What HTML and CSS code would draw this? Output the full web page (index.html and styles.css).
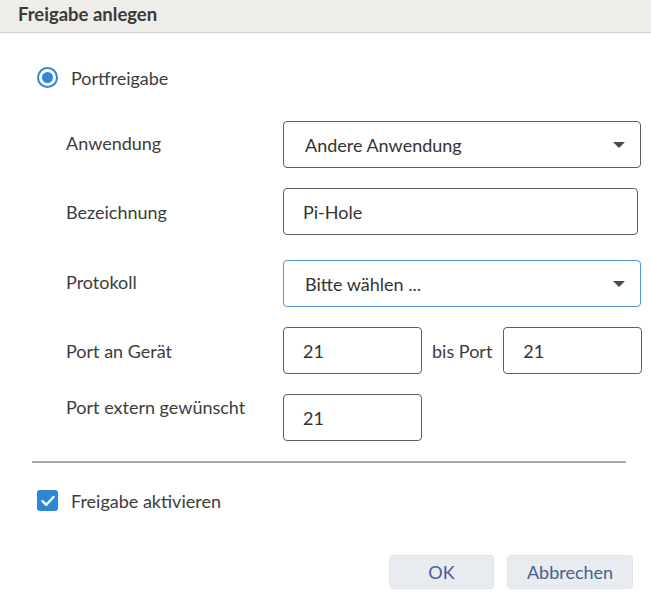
FILE: index.html
```html
<!DOCTYPE html>
<html lang="de">
<head>
<meta charset="utf-8">
<title>Freigabe anlegen</title>
<link rel="stylesheet" href="styles.css">
</head>
<body>
<div class="dialog">
  <div class="header">Freigabe anlegen</div>
  <div class="content">
    <div class="choice radio-row">
      <span class="radio"><span class="radio-dot"></span></span>
      <span class="choice-label">Portfreigabe</span>
    </div>
    <div class="form">
      <div class="label first">Anwendung</div>
      <div class="field select wide">
        <span>Andere Anwendung</span>
        <span class="arrow"></span>
      </div>

      <div class="label">Bezeichnung</div>
      <div class="field input mid"><span>Pi-Hole</span></div>

      <div class="label gap-lg">Protokoll</div>
      <div class="field select wide focus gap-lg">
        <span>Bitte wählen ...</span>
        <span class="arrow"></span>
      </div>

      <div class="label">Port an Gerät</div>
      <div class="port-row">
        <div class="field input small"><span>21</span></div>
        <span class="bis">bis Port</span>
        <div class="field input small"><span>21</span></div>
      </div>

      <div class="label top">Port extern gewünscht</div>
      <div class="port-row">
        <div class="field input small"><span>21</span></div>
      </div>
    </div>
    <hr class="divider">
    <div class="choice check-row">
      <span class="checkbox">
        <svg width="14" height="12" viewBox="0 0 14 12"><path d="M1.5 6.2 L5.3 9.8 L12.5 2" fill="none" stroke="#fff" stroke-width="2.4" stroke-linecap="round" stroke-linejoin="round"/></svg>
      </span>
      <span class="choice-label">Freigabe aktivieren</span>
    </div>
    <div class="buttons">
      <button class="btn ok">OK</button>
      <button class="btn cancel">Abbrechen</button>
    </div>
  </div>
</div>
</body>
</html>
```

FILE: styles.css
```css
html, body {
  margin: 0;
  padding: 0;
  background: #fff;
}
body {
  font-family: Lato, "Open Sans", "Liberation Sans", sans-serif;
  color: #3c3c3c;
  width: 651px;
  height: 606px;
  overflow: hidden;
}
.header {
  height: 33px;
  box-sizing: border-box;
  background: #eeede9;
  border-bottom: 1px solid #cfcfcd;
  padding-left: 18px;
  font-size: 18.5px;
  font-weight: 700;
  line-height: 28px;
  color: #3a3a3a;
}
.content {
  padding: 34px 0 0 32px;
}
.choice {
  display: flex;
  align-items: center;
  height: 21px;
  padding-left: 5px;
}
.choice-label {
  margin-left: 13px;
  font-size: 18px;
  color: #3c3c3c;
}
.radio {
  width: 21px;
  height: 21px;
  box-sizing: border-box;
  border: 2px solid #2e86d6;
  border-radius: 50%;
  display: flex;
  align-items: center;
  justify-content: center;
}
.radio-dot {
  width: 11px;
  height: 11px;
  border-radius: 50%;
  background: #2e86d6;
}
.form {
  display: grid;
  grid-template-columns: 217px 1fr;
  row-gap: 20px;
  margin-top: 33px;
  padding-left: 34px;
  align-items: center;
}
.label {
  font-size: 18px;
  color: #3c3c3c;
  margin-top: 0;
}
.label.first {
  margin-top: -4px;
}
.label.top {
  align-self: start;
  margin-top: 2px;
}
.gap-lg {
  margin-top: 5px;
}
.label.gap-lg {
  margin-top: 1px;
}
.field {
  height: 47px;
  box-sizing: border-box;
  border: 1px solid #5e5e5e;
  border-radius: 4px;
  display: flex;
  align-items: center;
  font-size: 18px;
  color: #333;
  background: #fff;
  flex-shrink: 0;
}
.select {
  padding-left: 21px;
  padding-right: 15px;
  justify-content: space-between;
}
.input {
  padding-left: 19px;
}
.wide {
  width: 358px;
}
.mid {
  width: 355px;
}
.small {
  width: 139px;
}
.focus {
  border-color: #4f95cf;
}
.arrow {
  width: 0;
  height: 0;
  border-left: 6px solid transparent;
  border-right: 6px solid transparent;
  border-top: 6px solid #4a4a4a;
}
.port-row {
  display: flex;
  align-items: center;
}
.bis {
  font-size: 18px;
  margin: 0 11px 0 10px;
  color: #3c3c3c;
  white-space: nowrap;
}
.divider {
  border: 0;
  height: 2px;
  background: #a3acab;
  width: 594px;
  margin: 20px 0 0 0;
}
.check-row {
  margin-top: 27px;
}
.checkbox {
  width: 21px;
  height: 21px;
  border-radius: 3px;
  background: #2e86d6;
  display: flex;
  align-items: center;
  justify-content: center;
}
.buttons {
  display: flex;
  justify-content: flex-end;
  gap: 13px;
  margin-top: 44px;
  padding-right: 18px;
}
.btn {
  height: 34px;
  border: 1px solid #dfe3e7;
  border-radius: 4px;
  background: #e8ebef;
  color: #44618f;
  font-family: inherit;
  font-size: 18px;
  padding: 0;
}
.ok {
  width: 105px;
}
.cancel {
  width: 126px;
}
```
